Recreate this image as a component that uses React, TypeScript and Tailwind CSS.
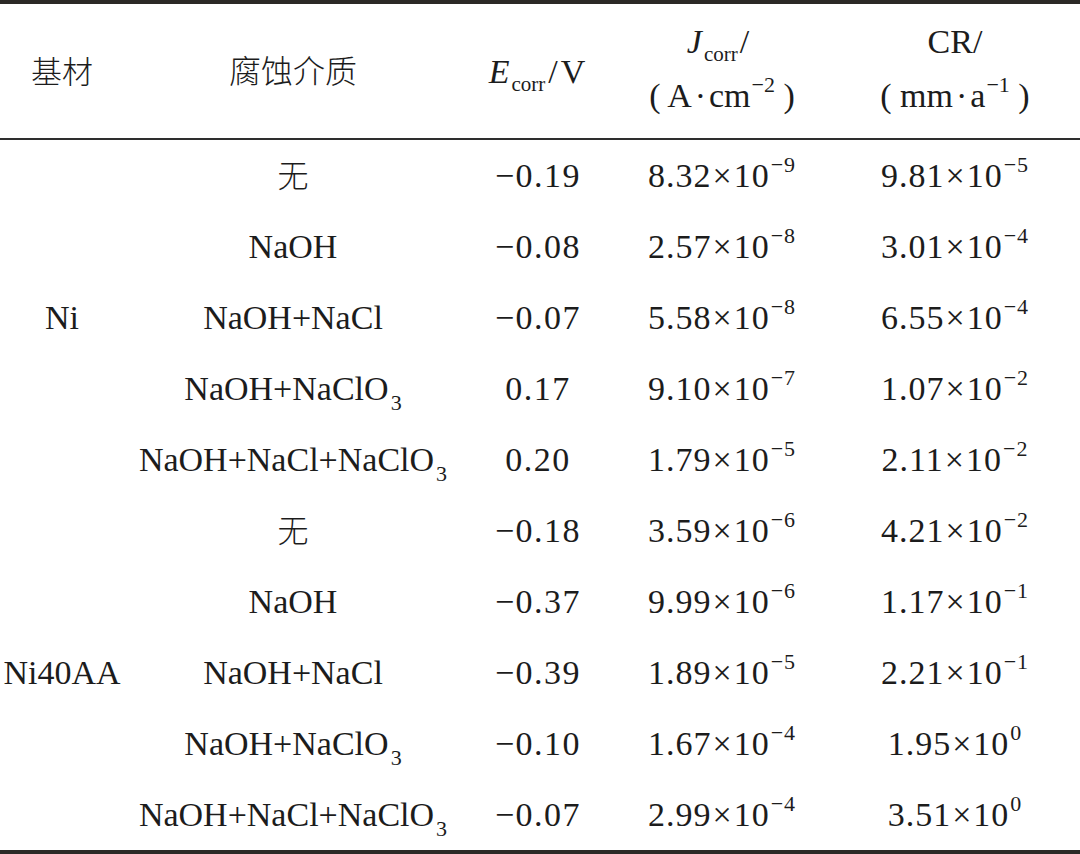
import React from "react";

type Row = {
  medium: React.ReactNode;
  e: string;
  j: [string, string];
  cr: [string, string];
};

const ClO3 = (prefix: string) => (
  <>
    {prefix}NaClO<sub className="text-[22px] top-[0.45em] ml-[2px]">3</sub>
  </>
);

const cn = (t: string) => (
  <span className="font-['Noto_Sans_CJK_SC',sans-serif] font-light text-[31px]">{t}</span>
);

const groups: { base: string; rows: Row[] }[] = [
  {
    base: "Ni",
    rows: [
      { medium: cn("无"), e: "−0.19", j: ["8.32", "−9"], cr: ["9.81", "−5"] },
      { medium: "NaOH", e: "−0.08", j: ["2.57", "−8"], cr: ["3.01", "−4"] },
      { medium: "NaOH+NaCl", e: "−0.07", j: ["5.58", "−8"], cr: ["6.55", "−4"] },
      { medium: ClO3("NaOH+"), e: "0.17", j: ["9.10", "−7"], cr: ["1.07", "−2"] },
      { medium: ClO3("NaOH+NaCl+"), e: "0.20", j: ["1.79", "−5"], cr: ["2.11", "−2"] },
    ],
  },
  {
    base: "Ni40AA",
    rows: [
      { medium: cn("无"), e: "−0.18", j: ["3.59", "−6"], cr: ["4.21", "−2"] },
      { medium: "NaOH", e: "−0.37", j: ["9.99", "−6"], cr: ["1.17", "−1"] },
      { medium: "NaOH+NaCl", e: "−0.39", j: ["1.89", "−5"], cr: ["2.21", "−1"] },
      { medium: ClO3("NaOH+"), e: "−0.10", j: ["1.67", "−4"], cr: ["1.95", "0"] },
      { medium: ClO3("NaOH+NaCl+"), e: "−0.07", j: ["2.99", "−4"], cr: ["3.51", "0"] },
    ],
  },
];

function Sci({ v }: { v: [string, string] }) {
  return (
    <span className="tracking-[1px]">
      {v[0]}
      <span className="mx-[1px]">×</span>10
      <sup className="text-[22px] -top-[0.7em] ml-[1px]">{v[1]}</sup>
    </span>
  );
}

export default function App() {
  return (
    <div className="w-[1080px] h-[854px] bg-white text-[#1c1c1c] font-['Liberation_Serif',serif] text-[34px] flex flex-col">
      <div className="h-[4px] bg-[#2b2926]" />
      <div className="h-[134px] grid grid-cols-[124px_338px_152px_216px_250px] items-center text-center">
        <div>{cn("基材")}</div>
        <div>
          <span className="font-['Noto_Sans_CJK_SC',sans-serif] font-light text-[32px]">腐蚀介质</span>
        </div>
        <div className="pr-[2px]">
          <i>E</i>
          <sub className="text-[21px] top-[0.4em] ml-[2px]">corr</sub>
          <span className="mx-[3px]">/</span>V
        </div>
        <div className="flex flex-col items-center gap-[14px] pb-[4px]">
          <div className="leading-[40px] pr-[8px]">
            <i>J</i>
            <sub className="text-[21px] top-[0.4em] ml-[2px]">corr</sub>
            <span className="ml-[2px]">/</span>
          </div>
          <div className="leading-[40px]">
            ( A<span className="mx-[3px]">·</span>cm
            <sup className="text-[22px] -top-[0.7em] ml-[1px]">−2</sup> )
          </div>
        </div>
        <div className="flex flex-col items-center gap-[14px] pb-[4px]">
          <div className="leading-[40px]">CR/</div>
          <div className="leading-[40px]">
            ( mm<span className="mx-[3px]">·</span>a
            <sup className="text-[22px] -top-[0.7em] ml-[1px]">−1</sup> )
          </div>
        </div>
      </div>
      <div className="h-[2px] bg-[#2e2e2e]" />
      <div className="grid grid-cols-[124px_338px_152px_216px_250px] grid-rows-[repeat(10,71px)] items-center text-center">
        {groups.map((g, gi) => (
          <React.Fragment key={gi}>
            <div className="row-span-5 col-start-1" style={{ gridRowStart: gi * 5 + 1 }}>
              {g.base}
            </div>
            {g.rows.map((r, ri) => (
              <React.Fragment key={ri}>
                <div className="col-start-2">{r.medium}</div>
                <div className="col-start-3 tracking-[1.5px]">{r.e}</div>
                <div className="col-start-4">
                  <Sci v={r.j} />
                </div>
                <div className="col-start-5">
                  <Sci v={r.cr} />
                </div>
              </React.Fragment>
            ))}
          </React.Fragment>
        ))}
      </div>
      <div className="h-[4px] bg-[#2b2926]" />
    </div>
  );
}
